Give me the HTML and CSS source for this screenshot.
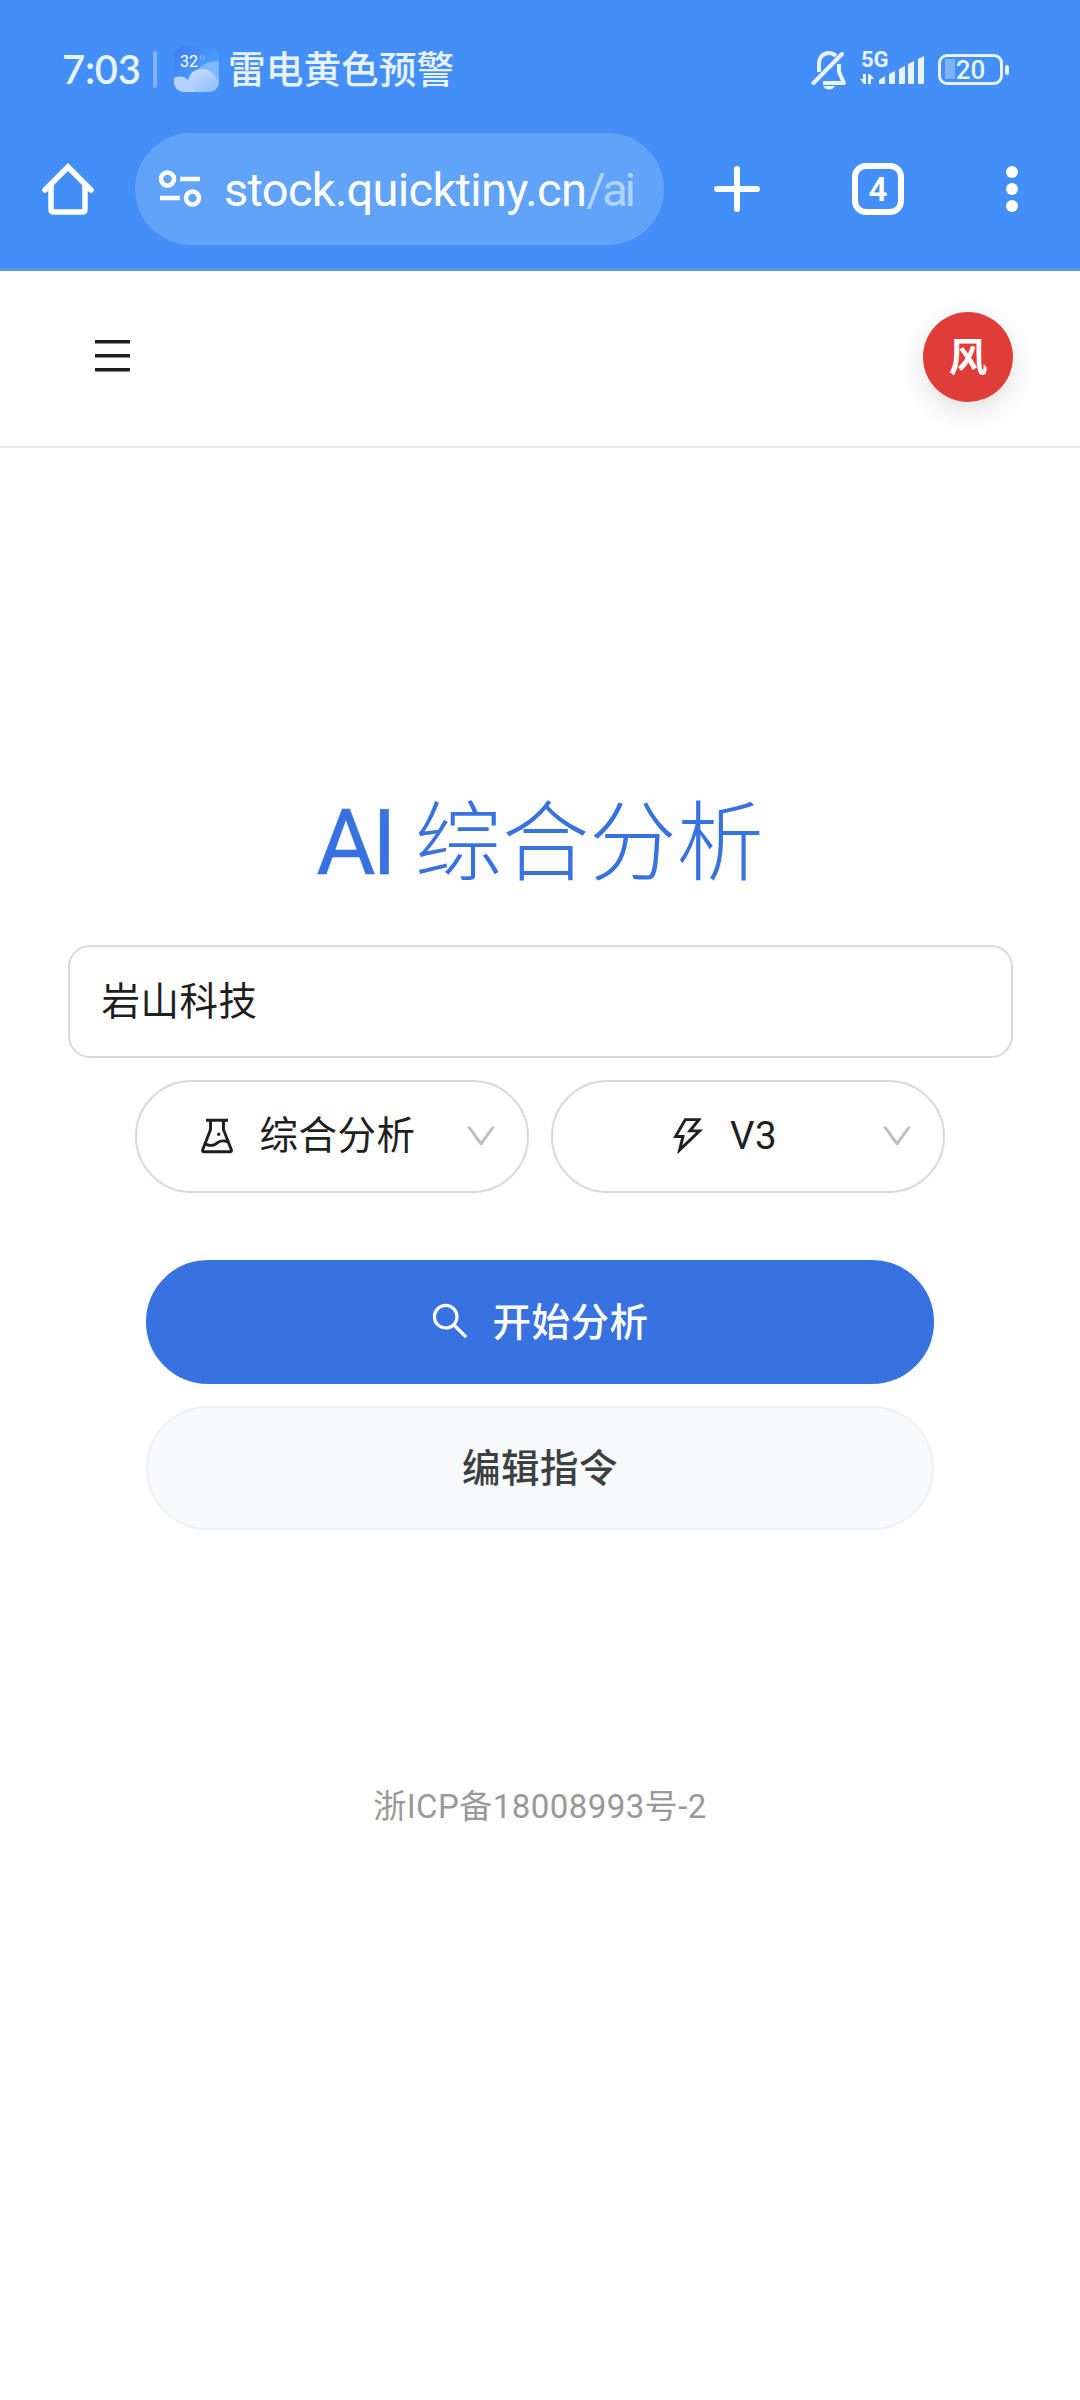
FILE: index.html
```html
<!DOCTYPE html>
<html lang="zh-CN">
<head>
    <meta charset="UTF-8">
    <meta name="viewport" content="width=device-width, initial-scale=1.0">
    <title>AI 综合分析</title>
    <link rel="stylesheet" href="styles.css">
</head>
<body>
    <div class="browser">
        <div class="status-bar">
            <span class="clock">7:03</span>
            <span class="divider"></span>
            <svg class="weather" viewBox="0 0 45 45">
                <defs>
                    <linearGradient id="sky" x1="0" y1="0" x2="1" y2="1">
                        <stop offset="0" stop-color="#3f78f5"/>
                        <stop offset="1" stop-color="#55b4fb"/>
                    </linearGradient>
                    <linearGradient id="cloud" x1="0" y1="0" x2="1" y2="1">
                        <stop offset="0" stop-color="#d6e6ff"/>
                        <stop offset="1" stop-color="#8dbcfd"/>
                    </linearGradient>
                    <clipPath id="tile"><rect width="45" height="45" rx="10"/></clipPath>
                </defs>
                <g clip-path="url(#tile)">
                    <rect width="45" height="45" fill="url(#sky)"/>
                    <path d="M22 25C27 17 36 14 45 14V45H22z" fill="#7ab9fd"/>
                    <path d="M0 31Q8 27 14 33Q17 22 28 22Q38 22 42 31Q45 33 45 37V45H0z" fill="url(#cloud)"/>
                    <path d="M0 31Q10 27 14 36Q22 40 20 45H0z" fill="#b3d2fe"/>
                </g>
                <text class="weather-temp" x="6" y="20">32</text>
                <circle cx="28.500" cy="10.500" r="2" fill="none" stroke="#7cc4fd" stroke-width="1"/>
            </svg>
            <span class="alert">雷电黄色预警</span>
            <div class="indicators">
                <svg class="bell" viewBox="0 0 36 40" fill="none" stroke="#e6f3ff" stroke-width="4">
                    <path d="M8 22V15C8 7 12 3 18 3C21 3 23 4 25 6M28 14V22L33 33H12" stroke-linejoin="round"/>
                    <path d="M2.500 33L31 4" stroke-linecap="round"/>
                    <path d="M12 36H24Q22 39.500 18 39.500Q14 39.500 12 36z" fill="#e6f3ff" stroke="none"/>
                </svg>
                <svg class="signal" viewBox="0 0 64 46">
                    <text class="signal-type" x="1" y="24">5G</text>
                    <g fill="#e6f3ff">
                        <path d="M3 31h3v10h-2l-4-5h3zM8 41V31h2l4 5h-3v5z"/>
                        <path d="M19 41V37l6-4v7q0 1-1 1zM29 41V31L35 28v12q0 1-1 1zM39 41V26l6-3v17q0 1-1 1zM48 41V21l6-3v22q0 1-1 1zM58 41V16l6-3v27q0 1-1 1z"/>
                    </g>
                </svg>
                <div class="battery">20</div>
            </div>
        </div>
        <div class="toolbar">
            <svg class="home" viewBox="0 0 52 52" fill="none" stroke="#fff" stroke-width="5.500">
                <path d="M3 27L26 4L49 27" stroke-linecap="round"/>
                <path d="M9 22V46Q9 49 12 49H40Q43 49 43 46V22"/>
            </svg>
            <div class="address">
                <svg class="tune" viewBox="0 0 44 38" fill="none" stroke="#fff" stroke-width="4.500">
                    <circle cx="9.500" cy="9" r="6.500"/>
                    <path d="M22 9H42M2 28H22"/>
                    <circle cx="34.500" cy="28" r="6.500"/>
                </svg>
                <span class="url">stock.quicktiny.cn<span class="url-path">/ai</span></span>
            </div>
            <svg class="plus" viewBox="0 0 46 46" stroke="#fff" stroke-width="6" stroke-linecap="round">
                <path d="M3 23H43M23 3V43"/>
            </svg>
            <div class="tabs">4</div>
            <div class="more"><i></i><i></i><i></i></div>
        </div>
    </div>

    <header class="header">
        <svg class="menu" viewBox="0 0 36 32" fill="#1f1f1f">
            <path d="M1 0H36V3.500H1zM1 14H36V17.500H1zM1 28H36V31.500H1z"/>
        </svg>
        <div class="avatar">风</div>
    </header>

    <main class="content">
        <h1 class="title"><span class="title-latin">AI</span> 综合分析</h1>
        <input class="stock-input" type="text" value="岩山科技">
        <div class="selects">
            <div class="select">
                <div class="select-value">
                    <svg class="icon" viewBox="0 0 1024 1024"><path d="M512 472a40 40 0 1080 0 40 40 0 10-80 0zm367 352.900L696.300 352V178H768v-68H256v68h71.700v174L145 824.900c-2.800 7.400-4.300 15.200-4.300 23.100 0 35.300 28.700 64 64 64h614.600c7.900 0 15.700-1.500 23.100-4.300 33-12.700 49.400-49.800 36.600-82.800zM395.700 364.700V180h232.600v184.700L719.200 600c-20.700-5.300-42.100-8-63.900-8-61.200 0-119.200 21.500-165.300 60a188.780 188.780 0 01-121.300 43.900c-32.700 0-64.100-8.300-91.800-23.700l118.800-307.500zM210.500 844l41.700-107.800c35.700 18.100 75.400 27.800 116.600 27.800 61.200 0 119.200-21.500 165.300-60 33.900-28.200 76.300-43.900 121.300-43.900 35 0 68.400 9.500 97.600 27.100L813.500 844h-603z"/></svg>
                    <span class="label">综合分析</span>
                </div>
                <svg class="arrow" viewBox="0 0 1024 1024"><path d="M884 256h-75c-5.100 0-9.900 2.500-12.900 6.600L512 654.200 227.900 262.600c-3-4.100-7.800-6.600-12.900-6.600h-75c-6.500 0-10.300 7.400-6.500 12.700l352.600 486.100c12.800 17.600 39 17.600 51.700 0l352.600-486.100c3.900-5.300.1-12.700-6.400-12.700z"/></svg>
            </div>
            <div class="select">
                <div class="select-value">
                    <svg class="icon" viewBox="0 0 1024 1024"><path d="M848 359.300H627.700L825.800 109c4.100-5.300.4-13-6.300-13H436c-2.800 0-5.500 1.500-6.900 4L170 547.500c-3.100 5.300.7 12 6.900 12h174.400l-89.400 357.600c-1.900 7.800 7.500 13.300 13.300 7.700L853.500 373c5.200-4.900 1.700-13.700-5.500-13.700zM378.200 732.500l60.300-241H281.100l189.600-327.400h224.600L487 427.400h211L378.200 732.500z"/></svg>
                    <span>V3</span>
                </div>
                <svg class="arrow" viewBox="0 0 1024 1024"><path d="M884 256h-75c-5.100 0-9.900 2.500-12.900 6.600L512 654.200 227.900 262.600c-3-4.100-7.800-6.600-12.900-6.600h-75c-6.500 0-10.300 7.400-6.500 12.700l352.600 486.100c12.800 17.600 39 17.600 51.700 0l352.600-486.100c3.900-5.300.1-12.700-6.400-12.700z"/></svg>
            </div>
        </div>
        <button class="btn btn-primary">
            <svg class="icon" viewBox="0 0 1024 1024"><path d="M909.600 854.500L649.900 594.800C690.200 542.700 712 479 712 412c0-80.200-31.300-155.400-87.900-212.100-56.600-56.700-132-87.900-212.100-87.900s-155.500 31.300-212.100 87.900C143.200 256.500 112 331.800 112 412c0 80.100 31.300 155.500 87.900 212.100C256.500 680.800 331.800 712 412 712c67 0 130.600-21.800 182.700-62l259.700 259.600a8.200 8.200 0 0011.600 0l43.600-43.500a8.200 8.200 0 000-11.600zM570.400 570.400C528 612.700 471.800 636 412 636s-116-23.300-158.400-65.600C211.300 528 188 471.800 188 412s23.300-116.100 65.600-158.400C296 211.300 352.200 188 412 188s116.100 23.200 158.400 65.600S636 352.200 636 412s-23.300 116.100-65.600 158.400z"/></svg>
            <span class="label">开始分析</span>
        </button>
        <button class="btn btn-default"><span class="label">编辑指令</span></button>
    </main>

    <footer class="footer">浙ICP备18008993号-2</footer>
</body>
</html>
```
FILE: styles.css
```css
:root {
    --browser-blue: #448ef8;
    --status-text: #e6f3ff;
    --primary: #3872e0;
    --text: #1f1f1f;
    --border: #d9d9d9;
}

* {
    margin: 0;
    padding: 0;
    box-sizing: border-box;
}

body {
    background: #fefefe;
    color: var(--text);
    font-family: Roboto, "Noto Sans CJK SC", sans-serif;
    font-size: 38.5px;
}

svg {
    display: block;
    flex: none;
}

/* Browser chrome */
.browser {
    height: 271px;
    background: var(--browser-blue);
    border-bottom: 3px solid #5896e8;
}

.status-bar {
    display: flex;
    align-items: center;
    height: 133px;
    padding: 6px 77px 0 62px;
    color: var(--status-text);
}

.clock {
    width: 91px;
    padding-bottom: 1px;
    font-family: Lato, sans-serif;
    font-size: 40px;
    font-weight: 600;
    letter-spacing: -0.3px;
    white-space: nowrap;
}

.divider {
    width: 4px;
    height: 37px;
    margin-right: 17px;
    border-radius: 2px;
    background: #83b4fb;
}

.weather {
    width: 45px;
    height: 45px;
    margin-right: 9px;
}

.weather-temp {
    fill: #fff;
    font-size: 16px;
}

.alert {
    padding-bottom: 6px;
    font-size: 37.7px;
    font-weight: 500;
    white-space: nowrap;
}

.indicators {
    display: flex;
    align-items: center;
    margin-left: auto;
}

.bell {
    width: 36px;
    height: 40px;
    margin-right: 13px;
}

.signal {
    width: 64px;
    height: 46px;
    margin: -7px 14px 0 0;
}

.signal-type {
    fill: var(--status-text);
    font-size: 22px;
    font-weight: 700;
}

.battery {
    position: relative;
    width: 65px;
    height: 31px;
    border: 3px solid var(--status-text);
    border-radius: 9px;
    background: linear-gradient(#7fb2fb, #7fb2fb) 4px 2px / 10px 20px no-repeat;
    font-size: 26px;
    font-weight: 500;
    line-height: 26px;
    text-align: center;
}

.battery::after {
    content: "";
    position: absolute;
    top: 8px;
    right: -9px;
    width: 4px;
    height: 10px;
    border-radius: 2px;
    background: var(--status-text);
}

.toolbar {
    display: flex;
    align-items: center;
    height: 112px;
    padding: 0 62px 0 42px;
    color: #fff;
}

.home {
    width: 52px;
    height: 52px;
}

.address {
    display: flex;
    align-items: center;
    width: 529px;
    height: 112px;
    margin: 0 50px 0 41px;
    padding-left: 23px;
    border-radius: 56px;
    background: #61a3f8;
}

.tune {
    width: 44px;
    height: 38px;
}

.url {
    margin-left: 22px;
    font-size: 47px;
    letter-spacing: -0.7px;
    white-space: nowrap;
}

.url-path {
    color: #b0d3fd;
    letter-spacing: -3.3px;
}

.plus {
    width: 46px;
    height: 46px;
}

.tabs {
    width: 52px;
    height: 52px;
    margin-left: 92px;
    border: 6px solid #fff;
    border-radius: 14px;
    font-size: 33px;
    font-weight: 600;
    line-height: 41px;
    text-align: center;
}

.more {
    display: flex;
    flex-direction: column;
    gap: 5px;
    margin-left: auto;
}

.more i {
    width: 12px;
    height: 12px;
    border-radius: 50%;
    background: #fff;
}

/* Page */
.header {
    display: flex;
    justify-content: space-between;
    align-items: center;
    height: 177px;
    padding: 0 67px 3px 94px;
    border-bottom: 2px solid #e8eaed;
}

.menu {
    width: 36px;
    height: 32px;
    margin-top: -2px;
}

.avatar {
    width: 90px;
    height: 90px;
    border-radius: 50%;
    background: #e03c3a;
    box-shadow: 0 8px 24px rgba(0, 0, 0, 0.12);
    color: #fff;
    font-size: 38.5px;
    font-weight: 700;
    line-height: 91px;
    text-align: center;
}

.content {
    display: flex;
    flex-direction: column;
    align-items: center;
    padding: 329px 67px 0;
}

.title {
    height: 132px;
    margin-bottom: 36px;
    color: var(--primary);
    font-size: 87.3px;
    font-weight: 300;
    line-height: 132px;
    white-space: nowrap;
}

.title-latin {
    font-size: 91px;
    font-weight: 400;
    letter-spacing: -3.5px;
    -webkit-text-stroke: 0.4px var(--primary);
}

.stock-input {
    width: 945px;
    height: 113px;
    padding: 0 32px 8px;
    border: 2px solid var(--border);
    border-radius: 22px;
    background: #fefefe;
    color: var(--text);
    font: inherit;
    letter-spacing: 0.5px;
}

.selects {
    display: flex;
    gap: 22px;
    margin: 22px 0 67px;
}

.select {
    display: flex;
    align-items: center;
    width: 394px;
    height: 113px;
    padding: 0 27px 0 31px;
    border: 2px solid var(--border);
    border-radius: 57px;
}

.select-value {
    display: flex;
    flex: 1;
    justify-content: center;
    align-items: center;
    gap: 20px;
    padding: 0 19px 2px 0;
    letter-spacing: 0.5px;
}

.label {
    padding-bottom: 7px;
}

.icon {
    width: 44px;
    height: 44px;
    fill: currentColor;
}

.arrow {
    width: 38px;
    height: 38px;
    margin-top: -2px;
    fill: #bfbfbf;
}

.btn {
    display: flex;
    justify-content: center;
    align-items: center;
    gap: 20px;
    width: 788px;
    height: 124px;
    border: 2px solid transparent;
    border-radius: 62px;
    font: inherit;
    font-weight: 500;
    letter-spacing: 0.5px;
}

.btn-primary {
    background: var(--primary);
    border-color: var(--primary);
    color: #fff;
}

.btn-primary .icon {
    margin: -3px 0 0 -3px;
}

.btn-default {
    margin-top: 22px;
    background: #f8f9fb;
    border-color: #f0f0f0;
    color: #3c4043;
}

.footer {
    margin-top: 252px;
    color: #999;
    font-size: 33px;
    letter-spacing: 0.45px;
    line-height: 50px;
    text-align: center;
}
```
